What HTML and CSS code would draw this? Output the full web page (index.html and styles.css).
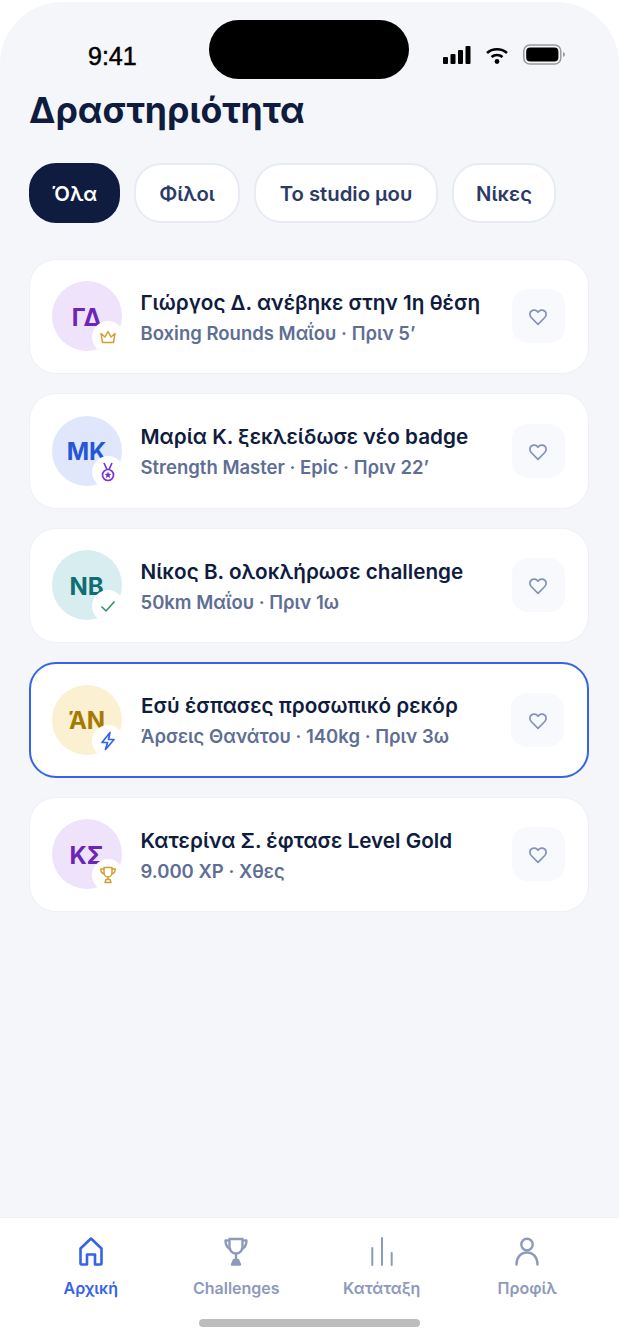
FILE: index.html
```html
<!DOCTYPE html>
<html lang="en">
<head>
    <meta charset="UTF-8">
    <meta name="viewport" content="width=device-width, initial-scale=1.0">
    <title>Δραστηριότητα</title>
    <link rel="stylesheet" href="styles.css">
</head>
<body>
    <div class="phone">
        <div class="island"></div>

        <div class="status-bar">
            <span class="clock">9:41</span>
            <div class="status-icons">
                <svg width="28" height="20" viewBox="0 0 28 20" fill="#000"><rect x="0" y="12" width="5" height="7" rx="1"/><rect x="7.500" y="9" width="5" height="10" rx="1"/><rect x="15" y="5" width="5" height="14" rx="1"/><rect x="22.500" y="1" width="5" height="18" rx="1"/></svg>
                <svg width="22" height="20" viewBox="0 0 22 20" fill="none" stroke="#000" stroke-width="2.600"><path d="M1 8c5.500-5 14.500-5 20 0"/><path d="M5.500 12c3-2.600 8-2.600 11 0"/><circle cx="11" cy="16.500" r="2.400" fill="#000" stroke="none"/></svg>
                <svg width="42" height="21" viewBox="0 0 42 21"><rect x="0.800" y="1" width="37" height="19" rx="6" fill="none" stroke="#9a9a9a" stroke-width="1.500"/><rect x="3.200" y="3.400" width="32.200" height="14.200" rx="4" fill="#000"/><path d="M40 8v5c1.200-.4 2-1.400 2-2.500S41.200 8.400 40 8z" fill="#9a9a9a"/></svg>
            </div>
        </div>

        <main class="content">
            <h1>Δραστηριότητα</h1>

            <div class="filters">
                <button class="chip chip-active chip-all">Όλα</button>
                <button class="chip chip-friends">Φίλοι</button>
                <button class="chip chip-studio">Το studio μου</button>
                <button class="chip chip-wins">Νίκες</button>
            </div>

            <div class="feed">
                <div class="card">
                    <div class="avatar avatar-purple">ΓΔ
                        <span class="badge">
                            <svg width="18" height="18" viewBox="0 0 18 18" fill="none" stroke="#d19e2f" stroke-width="1.500" stroke-linejoin="round"><path d="M3.500 14.500h11L16 5.500l-4 3.500L9 3.500 6 9 2 5.500z"/></svg>
                        </span>
                    </div>
                    <div class="info">
                        <div class="title">Γιώργος Δ. ανέβηκε στην 1η θέση</div>
                        <div class="meta">Boxing Rounds Μαΐου · Πριν 5’</div>
                    </div>
                    <button class="like"><svg width="20" height="20" viewBox="0 0 20 20" fill="none" stroke="#8493b5" stroke-width="1.700" stroke-linejoin="round"><path d="M10 17.300 3.200 10.500C1.300 8.500 1.500 5.500 3.400 4 5.400 2.400 8.300 2.800 10 5.200 11.700 2.800 14.600 2.400 16.600 4c1.900 1.500 2.100 4.500.2 6.500z"/></svg></button>
                </div>

                <div class="card">
                    <div class="avatar avatar-blue">ΜΚ
                        <span class="badge">
                            <svg width="18" height="20" viewBox="0 0 18 20" fill="none" stroke="#7a35d0" stroke-width="1.700"><path d="M5 1l3 6.500M13 1l-3 6.500"/><circle cx="9" cy="13" r="5.500"/><path d="M9 9.800l1 2 2.300.3-1.700 1.500.5 2.300-2.100-1.100-2.100 1.100.5-2.300-1.700-1.500 2.300-.3z" fill="#7a35d0" stroke="none"/></svg>
                        </span>
                    </div>
                    <div class="info">
                        <div class="title">Μαρία Κ. ξεκλείδωσε νέο badge</div>
                        <div class="meta">Strength Master · Epic · Πριν 22’</div>
                    </div>
                    <button class="like"><svg width="20" height="20" viewBox="0 0 20 20" fill="none" stroke="#8493b5" stroke-width="1.700" stroke-linejoin="round"><path d="M10 17.300 3.200 10.500C1.300 8.500 1.500 5.500 3.400 4 5.400 2.400 8.300 2.800 10 5.200 11.700 2.800 14.600 2.400 16.600 4c1.900 1.500 2.100 4.500.2 6.500z"/></svg></button>
                </div>

                <div class="card">
                    <div class="avatar avatar-teal">ΝΒ
                        <span class="badge">
                            <svg width="18" height="18" viewBox="0 0 18 18" fill="none" stroke="#2f8f5f" stroke-width="1.500"><path d="M2.500 9.500l4.500 4.500 8.500-9.500"/></svg>
                        </span>
                    </div>
                    <div class="info">
                        <div class="title">Νίκος Β. ολοκλήρωσε challenge</div>
                        <div class="meta">50km Μαΐου · Πριν 1ω</div>
                    </div>
                    <button class="like"><svg width="20" height="20" viewBox="0 0 20 20" fill="none" stroke="#8493b5" stroke-width="1.700" stroke-linejoin="round"><path d="M10 17.300 3.200 10.500C1.300 8.500 1.500 5.500 3.400 4 5.400 2.400 8.300 2.800 10 5.200 11.700 2.800 14.600 2.400 16.600 4c1.900 1.500 2.100 4.500.2 6.500z"/></svg></button>
                </div>

                <div class="card card-mine">
                    <div class="avatar avatar-yellow">ΆΝ
                        <span class="badge">
                            <svg width="18" height="20" viewBox="0 0 18 20" fill="none" stroke="#3563e9" stroke-width="1.700" stroke-linejoin="round"><path d="M11 1.500 3 11.500h5.500L6.500 18.500 15 8.500H9.500z"/></svg>
                        </span>
                    </div>
                    <div class="info">
                        <div class="title">Εσύ έσπασες προσωπικό ρεκόρ</div>
                        <div class="meta">Άρσεις Θανάτου · 140kg · Πριν 3ω</div>
                    </div>
                    <button class="like"><svg width="20" height="20" viewBox="0 0 20 20" fill="none" stroke="#8493b5" stroke-width="1.700" stroke-linejoin="round"><path d="M10 17.300 3.200 10.500C1.300 8.500 1.500 5.500 3.400 4 5.400 2.400 8.300 2.800 10 5.200 11.700 2.800 14.600 2.400 16.600 4c1.900 1.500 2.100 4.500.2 6.500z"/></svg></button>
                </div>

                <div class="card">
                    <div class="avatar avatar-purple">ΚΣ
                        <span class="badge">
                            <svg width="18" height="18" viewBox="0 0 18 18" fill="none" stroke="#d19e2f" stroke-width="1.500" stroke-linejoin="round"><path d="M5 1.500h8v5.500a4 4 0 0 1-8 0z"/><path d="M5 3H1.800c0 3 1 4.500 3.600 5M13 3h3.200c0 3-1 4.500-3.600 5M9 11v2.500M6 16.500l1-3h4l1 3z"/></svg>
                        </span>
                    </div>
                    <div class="info">
                        <div class="title">Κατερίνα Σ. έφτασε Level Gold</div>
                        <div class="meta">9.000 XP · Χθες</div>
                    </div>
                    <button class="like"><svg width="20" height="20" viewBox="0 0 20 20" fill="none" stroke="#8493b5" stroke-width="1.700" stroke-linejoin="round"><path d="M10 17.300 3.200 10.500C1.300 8.500 1.500 5.500 3.400 4 5.400 2.400 8.300 2.800 10 5.200 11.700 2.800 14.600 2.400 16.600 4c1.900 1.500 2.100 4.500.2 6.500z"/></svg></button>
                </div>
            </div>
        </main>

        <nav class="tabbar">
            <a class="tab tab-active">
                <svg width="30" height="30" viewBox="0 0 30 30" fill="none" stroke="#3563e9" stroke-width="2.600" stroke-linejoin="round"><path d="M15 1.500 4.500 11.500v15a1 1 0 0 0 1 1H11V17.500h8v10h5.500a1 1 0 0 0 1-1v-15z"/></svg>
                Αρχική
            </a>
            <a class="tab">
                <svg width="30" height="30" viewBox="0 0 30 30" fill="none" stroke="#8e9abb" stroke-width="2.400" stroke-linejoin="round"><path d="M8.500 2h13v8a6.500 6.500 0 0 1-13 0z"/><path d="M8.500 3.500H4.500c0 5 1.500 7.500 5.500 9M21.500 3.500h4c0 5-1.500 7.500-5.500 9M15 17v6"/><path d="M11 27.500l2-4.500h4l2 4.500z" fill="#8e9abb"/></svg>
                Challenges
            </a>
            <a class="tab">
                <svg width="30" height="30" viewBox="0 0 30 30" fill="none" stroke="#8e9abb" stroke-width="2" stroke-linecap="round"><path d="M5.300 11v17M15 1v27M24.700 16v12"/></svg>
                Κατάταξη
            </a>
            <a class="tab">
                <svg width="30" height="30" viewBox="0 0 30 30" fill="none" stroke="#8e9abb" stroke-width="2.400" stroke-linecap="round"><circle cx="15" cy="7.500" r="5.700"/><path d="M4.500 27.500c0-7 4-12 10.500-12s10.500 5 10.500 12"/></svg>
                Προφίλ
            </a>
        </nav>

        <div class="home-bar"></div>
    </div>
</body>
</html>
```

FILE: styles.css
```css
:root {
    --bg-screen: #f4f6fa;
    --navy: #0f1c40;
    --chip-text: #2b3a67;
    --meta: #5f6e95;
    --border: #e8ebf3;
    --blue: #3563e9;
    --tab-grey: #8e9abb;
}

* {
    box-sizing: border-box;
}

html, body {
    margin: 0;
    background-color: #fff;
}

body {
    font-family: Inter, "Noto Sans", sans-serif;
    color: var(--navy);
}

.phone {
    position: relative;
    width: 619px;
    height: 1337px;
    margin-top: 2px;
    display: flex;
    flex-direction: column;
    background-color: #fff;
    border-radius: 62px 62px 0 0;
    overflow: hidden;
}

.island {
    position: absolute;
    top: 18px;
    left: 209px;
    width: 200px;
    height: 59px;
    background-color: #000;
    border-radius: 30px;
}

.status-bar {
    height: 85px;
    padding: 34px 54px 0 88px;
    display: flex;
    justify-content: space-between;
    align-items: flex-start;
    background-color: var(--bg-screen);
}

.clock {
    font-family: "Liberation Sans", sans-serif;
    font-size: 25px;
    line-height: 40px;
    font-weight: 500;
    color: #000;
    -webkit-text-stroke: 0.5px #000;
}

.status-icons {
    display: flex;
    align-items: center;
    gap: 15px;
    margin-top: 8px;
}

.content {
    flex: 1;
    padding: 0 30px 0 29px;
    background-color: var(--bg-screen);
}

h1 {
    margin: 0;
    font-size: 35.600px;
    line-height: 48px;
    font-weight: 700;
    color: var(--navy);
}

.filters {
    display: flex;
    gap: 14px;
    margin-top: 28px;
}

.chip {
    height: 60px;
    padding: 0;
    border: 2px solid var(--border);
    border-radius: 27px;
    background-color: #fff;
    color: var(--chip-text);
    font-family: inherit;
    font-size: 20.300px;
    font-weight: 600;
}

.chip-all {
    width: 91px;
}

.chip-friends {
    width: 106px;
}

.chip-studio {
    width: 184px;
}

.chip-wins {
    width: 104px;
}

.chip-active {
    border-color: var(--navy);
    background-color: var(--navy);
    color: #fff;
}

.feed {
    display: flex;
    flex-direction: column;
    gap: 19px;
    margin-top: 35.500px;
}

.card {
    height: 115.500px;
    padding: 0 23.500px 0 21.500px;
    display: flex;
    align-items: center;
    background-color: #fff;
    border: 1.500px solid #eef0f6;
    border-radius: 27px;
}

.card-mine {
    border: 2px solid var(--blue);
    padding: 0 23px 0 21px;
}

.avatar {
    position: relative;
    flex: none;
    width: 70px;
    height: 70px;
    padding-top: 2px;
    border-radius: 50%;
    display: flex;
    align-items: center;
    justify-content: center;
    font-size: 24px;
    font-weight: 700;
}

.avatar-purple {
    background-color: #efe3fc;
    color: #6b26b8;
}

.avatar-blue {
    background-color: #e0e7fc;
    color: #2456d6;
}

.avatar-teal {
    background-color: #d7edf0;
    color: #0f6e73;
}

.avatar-yellow {
    background-color: #fcf0d2;
    color: #a47a05;
}

.badge {
    position: absolute;
    right: -2px;
    bottom: -2px;
    width: 32px;
    height: 32px;
    border-radius: 50%;
    background-color: #fff;
    display: flex;
    align-items: center;
    justify-content: center;
}

.info {
    flex: 1;
    margin-left: 19px;
    padding-top: 3px;
    min-width: 0;
}

.title {
    font-size: 20.700px;
    line-height: 30px;
    font-weight: 600;
    white-space: nowrap;
    color: var(--navy);
}

.meta {
    margin-top: 1px;
    font-size: 18.500px;
    line-height: 29px;
    font-weight: 600;
    white-space: nowrap;
    color: var(--meta);
}

.like {
    flex: none;
    width: 53px;
    height: 54px;
    padding: 2px 0 0;
    border: none;
    border-radius: 16px;
    background-color: #f8f9fc;
    display: flex;
    align-items: center;
    justify-content: center;
}

.tabbar {
    height: 122px;
    padding: 19px 19px 0 18px;
    display: grid;
    grid-template-columns: repeat(4, 1fr);
    align-items: start;
    background-color: #fff;
    border-top: 1px solid #eef0f5;
}

.tab {
    display: flex;
    flex-direction: column;
    align-items: center;
    gap: 10px;
    font-size: 16px;
    line-height: 22px;
    font-weight: 600;
    color: var(--tab-grey);
}

.tab-active {
    color: var(--blue);
}

.home-bar {
    position: absolute;
    left: 199px;
    bottom: 12px;
    width: 221px;
    height: 8px;
    border-radius: 4px;
    background-color: #bdbdbd;
}
```
